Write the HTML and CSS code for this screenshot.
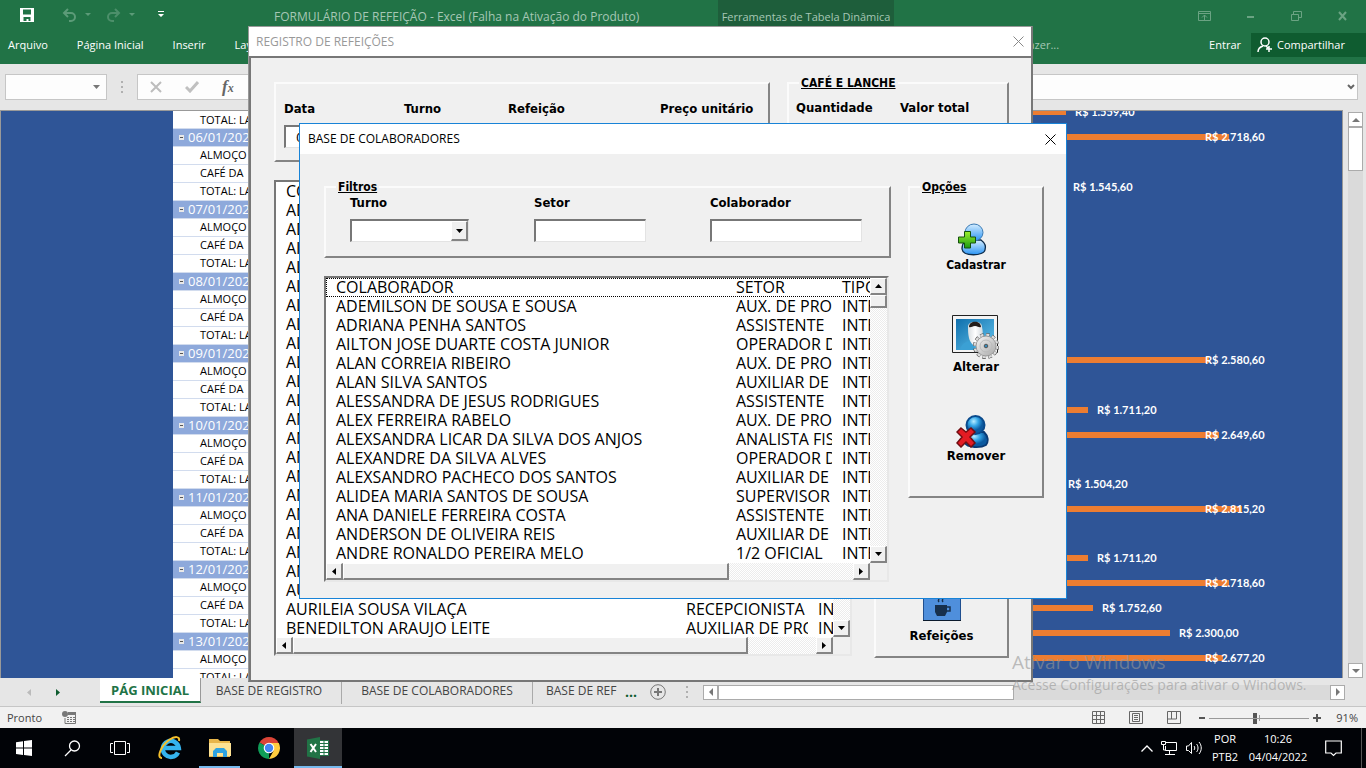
FILE: index.html
```
<!DOCTYPE html>
<html lang="pt-BR">
<head>
<meta charset="utf-8">
<title>FORMULÁRIO DE REFEIÇÃO - Excel</title>
<link rel="stylesheet" href="styles.css">
</head>
<body>
<div class="screen">
  <header class="ribbon">
    <div class="titlebar">
      <div class="quick">
        <button class="icon-btn" aria-label="Salvar"><svg width="14" height="14" viewBox="0 0 14 14"><path fill="#fff" fill-rule="evenodd" d="M0 0h14v14H0zM3 1.500h8v5H3zM3.500 9h7v4h-2v-2h-2v2h-3z"/></svg></button>
        <button class="icon-btn undo" aria-label="Desfazer"><svg width="30" height="14" viewBox="0 0 30 14"><path fill="none" stroke="#5c9b78" stroke-width="2" d="M6 1L2 5l4 4M2 5h7a4 4 0 0 1 0 8H7"/><path fill="#5c9b78" d="M23 5h6l-3 3z"/></svg></button>
        <button class="icon-btn redo" aria-label="Refazer"><svg width="30" height="14" viewBox="0 0 30 14"><path fill="none" stroke="#4c8f6a" stroke-width="2" d="M9 1l4 4-4 4M13 5H6a4 4 0 0 0 0 8h2"/><path fill="#5c9b78" d="M23 5h6l-3 3z"/></svg></button>
        <button class="icon-btn more-tools" aria-label="Personalizar"><svg width="6" height="8" viewBox="0 0 6 8"><path fill="#fff" d="M0 0h6v1H0zM0 3h6L3 6z"/></svg></button>
      </div>
      <span class="doc-title">FORMULÁRIO DE REFEIÇÃO - Excel (Falha na Ativação do Produto)</span>
      <span class="context-tab">Ferramentas de Tabela Dinâmica</span>
      <div class="win-controls">
        <button class="icon-btn" aria-label="Opções da faixa"><svg width="13" height="10" viewBox="0 0 13 10"><path fill="none" stroke="#6ba383" d="M.5.500h12v9H.5zM.5 2.500h12M6.500 9V4M4 6.500L6.500 4 9 6.500"/></svg></button>
        <button class="icon-btn" aria-label="Minimizar"><svg width="8" height="10" viewBox="0 0 8 10"><path fill="#6ba383" d="M0 5h7v2H0z"/></svg></button>
        <button class="icon-btn" aria-label="Restaurar"><svg width="11" height="10" viewBox="0 0 11 10"><path fill="none" stroke="#6ba383" d="M.5 3.500h7v6h-7zM2.500 3V.500h8v6H8"/></svg></button>
        <button class="icon-btn" aria-label="Fechar"><svg width="10" height="10" viewBox="0 0 10 10"><path stroke="#6ba383" stroke-width="2" d="M1 1l7 8M8 1L1 9"/></svg></button>
      </div>
    </div>
    <nav class="tabs">
      <a href="#" class="file">Arquivo</a><a href="#">Página Inicial</a><a href="#">Inserir</a><a href="#">Layout</a>
      <span class="tell">O que você deseja fazer...</span>
      <a href="#" class="enter">Entrar</a>
      <button class="share"><svg width="16" height="16" viewBox="0 0 16 16"><circle cx="8" cy="5" r="4" fill="none" stroke="#fff" stroke-width="1.500"/><path fill="none" stroke="#fff" stroke-width="1.500" d="M6 9c-3 1-5 3-5 6M9 9l2 2M12 9v6M9 12h6"/></svg>Compartilhar</button>
    </nav>
  </header>

  <div class="formula">
    <div class="namebox"><svg width="7" height="4" viewBox="0 0 7 4"><path fill="#777" d="M0 0h7L3.500 4z"/></svg></div>
    <svg class="grip" width="2" height="12" viewBox="0 0 2 12"><path fill="#b0b0b0" d="M0 0h2v2H0zM0 5h2v2H0zM0 10h2v2H0z"/></svg>
    <div class="fbox">
      <svg width="12" height="12" viewBox="0 0 12 12"><path stroke="#bdbdbd" stroke-width="2" d="M1 1l10 10M11 1L1 11"/></svg>
      <svg width="14" height="12" viewBox="0 0 14 12"><path fill="none" stroke="#c0c0c0" stroke-width="3" d="M1 6l4 4 8-9"/></svg>
      <span class="fx"><i>f</i><small>x</small></span>
      <svg class="expand" width="8" height="6" viewBox="0 0 8 6"><path fill="none" stroke="#666" stroke-width="2" d="M1 1l3 3 3-3"/></svg>
    </div>
  </div>

  <main class="sheet">
    <div class="grid-area">
      <div class="blank"></div>
      <table class="pivot">
        <tbody>
        <tr><td>TOTAL: LA</td></tr>
        <tr class="g"><th><b></b>06/01/2022</th></tr><tr><td>ALMOÇO</td></tr><tr><td>CAFÉ DA</td></tr><tr><td>TOTAL: LA</td></tr>
        <tr class="g"><th><b></b>07/01/2022</th></tr><tr><td>ALMOÇO</td></tr><tr><td>CAFÉ DA</td></tr><tr><td>TOTAL: LA</td></tr>
        <tr class="g"><th><b></b>08/01/2022</th></tr><tr><td>ALMOÇO</td></tr><tr><td>CAFÉ DA</td></tr><tr><td>TOTAL: LA</td></tr>
        <tr class="g"><th><b></b>09/01/2022</th></tr><tr><td>ALMOÇO</td></tr><tr><td>CAFÉ DA</td></tr><tr><td>TOTAL: LA</td></tr>
        <tr class="g"><th><b></b>10/01/2022</th></tr><tr><td>ALMOÇO</td></tr><tr><td>CAFÉ DA</td></tr><tr><td>TOTAL: LA</td></tr>
        <tr class="g"><th><b></b>11/01/2022</th></tr><tr><td>ALMOÇO</td></tr><tr><td>CAFÉ DA</td></tr><tr><td>TOTAL: LA</td></tr>
        <tr class="g"><th><b></b>12/01/2022</th></tr><tr><td>ALMOÇO</td></tr><tr><td>CAFÉ DA</td></tr><tr><td>TOTAL: LA</td></tr>
        <tr class="g"><th><b></b>13/01/2022</th></tr><tr><td>ALMOÇO</td></tr><tr><td>TOTAL: LA</td></tr>
        </tbody>
      </table>
      <div class="chart">
        <div class="bar-row" style="--end:218px"><i></i><span>R$ 1.559,40</span></div>
        <div class="bar-row" style="--end:381px"><i></i><span>R$ 2.718,60</span></div>
        <div class="bar-row"></div>
        <div class="bar-row" style="--end:216px"><i></i><span>R$ 1.545,60</span></div>
        <div class="bar-row"></div><div class="bar-row"></div><div class="bar-row"></div><div class="bar-row"></div><div class="bar-row"></div><div class="bar-row"></div>
        <div class="bar-row" style="--end:361px"><i></i><span>R$ 2.580,60</span></div>
        <div class="bar-row"></div>
        <div class="bar-row" style="--end:240px"><i></i><span>R$ 1.711,20</span></div>
        <div class="bar-row" style="--end:371px"><i></i><span>R$ 2.649,60</span></div>
        <div class="bar-row"></div>
        <div class="bar-row" style="--end:211px"><i></i><span>R$ 1.504,20</span></div>
        <div class="bar-row" style="--end:394px"><i></i><span>R$ 2.815,20</span></div>
        <div class="bar-row"></div>
        <div class="bar-row" style="--end:240px"><i></i><span>R$ 1.711,20</span></div>
        <div class="bar-row" style="--end:381px"><i></i><span>R$ 2.718,60</span></div>
        <div class="bar-row" style="--end:245px"><i></i><span>R$ 1.752,60</span></div>
        <div class="bar-row" style="--end:322px"><i></i><span>R$ 2.300,00</span></div>
        <div class="bar-row" style="--end:375px"><i></i><span>R$ 2.677,20</span></div>
      </div>
    </div>
    <div class="xl-vscroll">
      <button class="xl-btn" aria-label="Acima"><svg width="8" height="4" viewBox="0 0 8 4"><path fill="#777" d="M0 4h8L4 0z"/></svg></button>
      <div class="xl-thumb-v"></div>
      <button class="xl-btn end" aria-label="Abaixo"><svg width="8" height="4" viewBox="0 0 8 4"><path fill="#777" d="M0 0h8L4 4z"/></svg></button>
    </div>
  </main>

  <div class="sheet-tabs">
    <div class="tab-nav">
      <button class="icon-btn" aria-label="Anterior"><svg width="4" height="7" viewBox="0 0 4 7"><path fill="#bbb" d="M4 0v7L0 3.500z"/></svg></button>
      <button class="icon-btn" aria-label="Próxima"><svg width="4" height="7" viewBox="0 0 4 7"><path fill="#0e5c2f" d="M0 0v7l4-3.500z"/></svg></button>
    </div>
    <button class="stab active">PÁG INICIAL</button>
    <button class="stab t1">BASE DE REGISTRO</button>
    <button class="stab t2">BASE DE COLABORADORES</button>
    <button class="stab t3">BASE DE REF</button>
    <span class="more">...</span>
    <button class="icon-btn" aria-label="Nova planilha"><svg width="16" height="16" viewBox="0 0 16 16"><circle cx="8" cy="8" r="7.300" fill="none" stroke="#777"/><path stroke="#777" stroke-width="2" d="M8 4v8M4 8h8"/></svg></button>
    <svg class="tab-grip" width="2" height="12" viewBox="0 0 2 12"><path fill="#b0b0b0" d="M0 0h2v2H0zM0 5h2v2H0zM0 10h2v2H0z"/></svg>
    <div class="xl-hscroll">
      <button class="xl-btn" aria-label="Esquerda"><svg width="4" height="8" viewBox="0 0 4 8"><path fill="#777" d="M4 0v8L0 4z"/></svg></button>
      <div class="xl-thumb-h"></div>
      <button class="xl-btn end" aria-label="Direita"><svg width="4" height="8" viewBox="0 0 4 8"><path fill="#777" d="M0 0v8l4-4z"/></svg></button>
    </div>
  </div>

  <div class="status">
    <span>Pronto</span>
    <svg class="macro" width="14" height="13" viewBox="0 0 14 13"><path fill="none" stroke="#777" d="M3 7v5.500h10.500v-11H7"/><path fill="#777" d="M6 1h8v3H6zM5 6h2v1H5zM8 6h2v1H8zM11 6h2v1h-2zM5 8h2v1H5zM8 8h2v1H8zM11 8h2v1h-2zM5 10h2v1H5zM8 10h2v1H8zM11 10h2v1h-2z"/><circle cx="3" cy="3" r="3" fill="#777"/></svg>
    <div class="views">
      <svg width="13" height="13" viewBox="0 0 13 13"><path fill="none" stroke="#666" d="M.5.500h12v12H.5zM4.500 0v13M8.500 0v13M0 4.500h13M0 8.500h13"/></svg>
      <svg width="14" height="13" viewBox="0 0 14 13"><path fill="none" stroke="#666" d="M.5.500h13v12H.5zM3.500 2.500h7v8h-7zM5 4.500h4M5 6.500h4M5 8.500h4"/></svg>
      <svg width="14" height="13" viewBox="0 0 14 13"><path fill="none" stroke="#666" d="M.5.500h13v12H.5zM4.500 0v8M9.500 0v8H.5"/></svg>
    </div>
    <svg class="zoom" width="122" height="12" viewBox="0 0 122 12"><path fill="#555" d="M0 5h6v2H0zM114 5h8v2h-8zM117 2h2v8h-2zM54 1h4v11h-4z"/><path fill="#999" d="M10 6h100v1H10zM60 3h1v6h-1z"/></svg>
    <span class="pct">91%</span>
  </div>

  <footer class="taskbar">
    <button class="task" aria-label="Iniciar"><svg width="16" height="16" viewBox="0 0 16 16"><path fill="#fff" d="M0 2.300L7 1.200v6.300H0zM8 1l8-1v7.500H8zM0 8.500h7v6.400L0 13.900zM8 8.500h8V16l-8-1.100z"/></svg></button>
    <button class="task" aria-label="Pesquisar"><svg width="17" height="17" viewBox="0 0 17 17"><circle cx="10.500" cy="6" r="5" fill="none" stroke="#fff" stroke-width="1.300"/><path stroke="#fff" stroke-width="1.300" d="M7 10l-6 6"/></svg></button>
    <button class="task" aria-label="Visão de tarefas"><svg width="20" height="14" viewBox="0 0 20 14"><path fill="none" stroke="#fff" d="M4.500.500h11v13h-11zM3 2.500H.5v9H3M17 2.500h2.500v9H17"/></svg></button>
    <button class="task" aria-label="Internet Explorer"><svg width="24" height="24" viewBox="0 0 24 24"><path fill="none" stroke="#35b4ee" stroke-width="4.500" d="M20 16.500a8 8 0 1 1 .8-4.500H6"/><path fill="none" stroke="#f5c02c" stroke-width="2" d="M4 22C-2 22 3 10 11 4c6-4 11-4 10 1"/></svg></button>
    <button class="task open folder" aria-label="Explorador"><svg width="22" height="20" viewBox="0 0 22 20"><path fill="#e8b64a" d="M0 1h9l2 2h10v16H0z"/><path fill="#fde293" d="M0 5h22v13H0z"/><path fill="#2ea3e0" d="M4 19v-6l3-3h8l3 3v6h-4v-4H8v4z"/></svg></button>
    <button class="task chrome" aria-label="Chrome"><svg width="22" height="22" viewBox="0 0 22 22"><path fill="#db4437" d="M11 11L1.500 5.500a11 11 0 0 1 19 0z"/><path fill="#0f9d58" d="M11 11v11A11 11 0 0 1 1.500 5.500z"/><path fill="#ffcd40" d="M11 6h9.800a11 11 0 0 1-9.800 16l4.500-8z"/><circle cx="11" cy="11" r="5.300" fill="#fff"/><circle cx="11" cy="11" r="4.200" fill="#4285f4"/></svg></button>
    <button class="task open excel" aria-label="Excel"><svg width="22" height="22" viewBox="0 0 22 22"><path fill="#fff" stroke="#217346" d="M12 3.500h9.500v15H12z"/><path stroke="#217346" d="M13 6.500h8M13 9.500h8M13 12.500h8M13 15.500h8M17 4v14"/><path fill="#217346" d="M0 2.500L13 0v22L0 19.500z"/><path stroke="#fff" stroke-width="2" d="M3.500 7l5.500 8M9 7l-5.500 8"/></svg></button>
    <div class="tray">
      <svg width="12" height="7" viewBox="0 0 12 7"><path fill="none" stroke="#fff" stroke-width="1.300" d="M.5 6.500L6 1l5.500 5.500"/></svg>
      <svg width="17" height="14" viewBox="0 0 17 14"><path fill="none" stroke="#fff" d="M5 1.500h10.500v8H4.500V5M8.500 10v3M4 13.500h10M.5 .5h4v3h-4zM2.500 4v5H5"/></svg>
      <svg width="17" height="14" viewBox="0 0 17 14"><path fill="none" stroke="#fff" d="M.5 5v4.500h2l3 3v-11l-3 3.500zM8 5c1 1 1 3 0 4M10.500 3c2 2 2 6 0 8M13 1c3 3.500 3 8.500 0 12"/></svg>
      <span class="two">POR<br>PTB2</span>
      <span class="two clock">10:26<br>04/04/2022</span>
      <svg class="note" width="17" height="17" viewBox="0 0 17 17"><path fill="none" stroke="#fff" stroke-width="1.200" d="M.7 1h15.600v12H11l-2.500 2.500L6 13H.7z"/></svg>
      <span class="peek"></span>
    </div>
  </footer>

  <section class="dialog back">
    <div class="dlg-title"><span>REGISTRO DE REFEIÇÕES</span><button class="icon-btn" aria-label="Fechar"><svg width="11" height="11" viewBox="0 0 11 11"><path stroke="#888" d="M.5.500l10 10M10.500.500l-10 10"/></svg></button></div>
    <div class="dlg-body">
      <div class="meal-row">
        <fieldset class="frame meal">
          <div class="heads"><label for="data">Data</label><span>Turno</span><span>Refeição</span><span>Preço unitário</span></div>
          <input class="sunk" id="data" value="04/04/2022">
        </fieldset>
        <fieldset class="frame snack"><legend>CAFÉ E LANCHE</legend><div class="heads2"><span>Quantidade</span><span>Valor total</span></div></fieldset>
      </div>
      <div class="low-row">
        <div class="listbox l1">
          <div class="view">
            <table class="rows">
              <colgroup><col class="c-name"><col class="c-set1"><col></colgroup>
              <tbody>
              <tr><td>COLABORADOR</td><td></td><td></td></tr>
              <tr><td>ADEMILSON</td><td></td><td></td></tr><tr><td>ADRIANA</td><td></td><td></td></tr><tr><td>AILTON</td><td></td><td></td></tr>
              <tr><td>ALAN</td><td></td><td></td></tr><tr><td>ALAN</td><td></td><td></td></tr><tr><td>ALESSANDRA</td><td></td><td></td></tr><tr><td>ALEX</td><td></td><td></td></tr>
              <tr><td>ALEXSANDRA</td><td></td><td></td></tr><tr><td>ALEXANDRE</td><td></td><td></td></tr><tr><td>ALEXSANDRO</td><td></td><td></td></tr><tr><td>ALIDEA</td><td></td><td></td></tr>
              <tr><td>ANA</td><td></td><td></td></tr><tr><td>ANDERSON</td><td></td><td></td></tr><tr><td>ANDRE</td><td></td><td></td></tr>
              <tr><td>AN</td><td></td><td></td></tr><tr><td>AN</td><td></td><td></td></tr><tr><td>AN</td><td></td><td></td></tr><tr><td>AN</td><td></td><td></td></tr><tr><td>AN</td><td></td><td></td></tr><tr><td>AN</td><td></td><td></td></tr>
              <tr><td>AU</td><td></td><td></td></tr>
              <tr><td>AURILEIA SOUSA VILAÇA</td><td>RECEPCIONISTA</td><td>INTERNO</td></tr>
              <tr><td>BENEDILTON ARAUJO LEITE</td><td>AUXILIAR DE PRODUÇÃO</td><td>INTERNO</td></tr>
              </tbody>
            </table>
          </div>
          <div class="vs"><button class="sb" aria-label="Acima"><svg width="7" height="4" viewBox="0 0 7 4"><path d="M0 4h7L3.500 0z"/></svg></button><div class="th-v"></div><button class="sb end" aria-label="Abaixo"><svg width="7" height="4" viewBox="0 0 7 4"><path d="M0 0h7L3.500 4z"/></svg></button></div>
          <div class="hs"><button class="sb" aria-label="Esquerda"><svg width="4" height="7" viewBox="0 0 4 7"><path d="M4 0v7L0 3.500z"/></svg></button><div class="th-h w1"></div><button class="sb end" aria-label="Direita"><svg width="4" height="7" viewBox="0 0 4 7"><path d="M0 0v7l4-3.500z"/></svg></button></div>
        </div>
        <fieldset class="frame meals"><button class="cmd meal-btn"><svg width="38" height="38" viewBox="0 0 38 38"><path fill="#4f8fdc" stroke="#1f4f8f" d="M.5.500h37v37H.5z"/><path stroke="#0b1a2c" d="M0 37.500h38"/><path fill="#17304d" d="M12 22h12v7l-2 4h-8l-2-4z"/><path fill="none" stroke="#17304d" stroke-width="1.500" d="M24 24h3v4h-4M16 19c-2-2 1-3 0-5M20 19c-2-2 1-4 0-6"/></svg><span>Refeições</span></button></fieldset>
      </div>
    </div>
  </section>

  <section class="dialog front">
    <div class="dlg-title"><span>BASE DE COLABORADORES</span><button class="icon-btn" aria-label="Fechar"><svg width="11" height="11" viewBox="0 0 11 11"><path stroke="#000" d="M.5.500l10 10M10.500.500l-10 10"/></svg></button></div>
    <div class="front-body">
      <div class="left">
        <fieldset class="frame filters">
          <legend>Filtros</legend>
          <div class="fields">
            <div class="field f1"><label for="turno">Turno</label><div class="combo sunk"><select id="turno"><option></option></select><span class="sb"><svg width="7" height="4" viewBox="0 0 7 4"><path d="M0 0h7L3.500 4z"/></svg></span></div></div>
            <div class="field f2"><label for="setor">Setor</label><input class="sunk" id="setor"></div>
            <div class="field f3"><label for="colab">Colaborador</label><input class="sunk" id="colab"></div>
          </div>
        </fieldset>
        <div class="listbox l2">
          <div class="view">
            <table class="rows">
              <colgroup><col class="c-name"><col class="c-set2"><col></colgroup>
              <thead><tr><th>COLABORADOR</th><th>SETOR</th><th>TIPO</th></tr></thead>
              <tbody>
              <tr><td>ADEMILSON DE SOUSA E SOUSA</td><td>AUX. DE PRO</td><td>INTERNO</td></tr>
              <tr><td>ADRIANA PENHA SANTOS</td><td>ASSISTENTE</td><td>INTERNO</td></tr>
              <tr><td>AILTON JOSE DUARTE COSTA JUNIOR</td><td>OPERADOR DE</td><td>INTERNO</td></tr>
              <tr><td>ALAN CORREIA RIBEIRO</td><td>AUX. DE PRO</td><td>INTERNO</td></tr>
              <tr><td>ALAN SILVA SANTOS</td><td>AUXILIAR DE</td><td>INTERNO</td></tr>
              <tr><td>ALESSANDRA DE JESUS RODRIGUES</td><td>ASSISTENTE</td><td>INTERNO</td></tr>
              <tr><td>ALEX FERREIRA RABELO</td><td>AUX. DE PRO</td><td>INTERNO</td></tr>
              <tr><td>ALEXSANDRA LICAR DA SILVA DOS ANJOS</td><td>ANALISTA FISCAL</td><td>INTERNO</td></tr>
              <tr><td>ALEXANDRE DA SILVA ALVES</td><td>OPERADOR DE</td><td>INTERNO</td></tr>
              <tr><td>ALEXSANDRO PACHECO DOS SANTOS</td><td>AUXILIAR DE</td><td>INTERNO</td></tr>
              <tr><td>ALIDEA MARIA SANTOS DE SOUSA</td><td>SUPERVISOR</td><td>INTERNO</td></tr>
              <tr><td>ANA DANIELE FERREIRA COSTA</td><td>ASSISTENTE</td><td>INTERNO</td></tr>
              <tr><td>ANDERSON DE OLIVEIRA REIS</td><td>AUXILIAR DE</td><td>INTERNO</td></tr>
              <tr><td>ANDRE RONALDO PEREIRA MELO</td><td>1/2 OFICIAL</td><td>INTERNO</td></tr>
              </tbody>
            </table>
          </div>
          <div class="vs"><button class="sb" aria-label="Acima"><svg width="7" height="4" viewBox="0 0 7 4"><path d="M0 4h7L3.500 0z"/></svg></button><div class="th-v"></div><button class="sb end" aria-label="Abaixo"><svg width="7" height="4" viewBox="0 0 7 4"><path d="M0 0h7L3.500 4z"/></svg></button></div>
          <div class="hs"><button class="sb" aria-label="Esquerda"><svg width="4" height="7" viewBox="0 0 4 7"><path d="M4 0v7L0 3.500z"/></svg></button><div class="th-h w2"></div><button class="sb end" aria-label="Direita"><svg width="4" height="7" viewBox="0 0 4 7"><path d="M0 0v7l4-3.500z"/></svg></button></div>
        </div>
      </div>
      <fieldset class="frame options">
        <legend>Opções</legend>
        <button class="cmd add"><svg width="36" height="34" viewBox="0 0 36 34">
          <defs><linearGradient id="sky" x2="0" y2="1"><stop offset="0" stop-color="#d4edff"/><stop offset="1" stop-color="#2a94f4"/></linearGradient><linearGradient id="grass" x2="0" y2="1"><stop offset="0" stop-color="#9cf02c"/><stop offset="1" stop-color="#1a9a12"/></linearGradient></defs>
          <path fill="url(#sky)" stroke="#0a2a4a" stroke-width="1.300" d="M4 26c0-7 4-9 7-9h12c4 3 5 7 4 10-1 6-22 7-23-1z"/><ellipse cx="16" cy="9.500" rx="9" ry="8.500" fill="url(#sky)" stroke="#3a7ab4"/><path fill="url(#grass)" stroke="#14500c" d="M6.500 8.500h6v5.500h5v6h-5v5h-6v-5h-6v-6h6z"/></svg><span>Cadastrar</span></button>
        <button class="cmd edit"><svg width="48" height="44" viewBox="0 0 48 44">
          <defs><linearGradient id="photo" x2="1" y2="1"><stop offset="0" stop-color="#0f6fac"/><stop offset="1" stop-color="#64c4ee"/></linearGradient><linearGradient id="gear" x2="1" y2="1"><stop offset="0" stop-color="#f6f6f6"/><stop offset="1" stop-color="#a8a8a8"/></linearGradient><linearGradient id="skin"><stop offset="0" stop-color="#d8dde0"/><stop offset=".5" stop-color="#fff"/><stop offset="1" stop-color="#d4dade"/></linearGradient></defs>
          <path fill="#f4f4f4" stroke="#222" d="M.5.500h45v37H.5z"/><path fill="url(#photo)" d="M4 4h38v31H4z"/><path fill="#3ba0d4" d="M8 35c1-5 4-8 9-9l8 9z"/><path fill="url(#skin)" d="M16 12c0-3 2-5 7-5s7 2 7 5c1 4 1 8 0 11-1 4-3 8-6 8s-6-4-7-8c-1-4-1-8-1-11z"/><path fill="#241d1a" d="M17 12c0-7 12-7 12 0-2 1-3-1-6-1s-4 2-6 1z"/>
          <circle cx="34" cy="31" r="11.500" fill="none" stroke="#444" stroke-width="3" stroke-dasharray="3.500 2.500"/><circle cx="34" cy="31" r="11" fill="none" stroke="#dcdcdc" stroke-width="3" stroke-dasharray="3 2.750"/><circle cx="34" cy="31" r="10" fill="url(#gear)" stroke="#999"/><circle cx="34" cy="31" r="6" fill="none" stroke="#bbb"/><circle cx="34" cy="31" r="1.800" fill="#3a8ab8" stroke="#555"/></svg><span>Alterar</span></button>
        <button class="cmd del"><svg width="40" height="33" viewBox="0 0 40 33">
          <defs><radialGradient id="deep" cx=".4" cy=".3"><stop offset="0" stop-color="#b8ecff"/><stop offset=".5" stop-color="#36a8e8"/><stop offset="1" stop-color="#0c5aa0"/></radialGradient></defs>
          <path fill="url(#deep)" stroke="#0a3a74" stroke-width="1.800" d="M9 28c0-7 4-10 8-11h11c4 4 5 9 2 13-5 3-19 3-21-2z"/><circle cx="19.500" cy="10" r="9" fill="url(#deep)" stroke="#0a4a8c" stroke-width="2"/><path fill="#e31b23" stroke="#700d12" stroke-width="1.500" d="M5 13l5 4 5-4 4 4-5 5 5 6-4 4-5-5-5 5-4-4 5-6-5-5z"/></svg><span>Remover</span></button>
      </fieldset>
    </div>
  </section>

  <div class="watermark"><p class="wm1">Ativar o Windows</p><p class="wm2">Acesse Configurações para ativar o Windows.</p></div>
</div>
</body>
</html>
```
FILE: styles.css
```
* { box-sizing: border-box; }
body { margin: 0; font: 12px/16px "Open Sans", "Noto Sans", sans-serif; color: #000; }
button, input, select { font: inherit; color: inherit; margin: 0; padding: 0; border: 0; background: none; border-radius: 0; outline: 0; }
a { color: inherit; text-decoration: none; }
svg { display: block; flex: none; }
p { margin: 0; }
.icon-btn { display: flex; align-items: center; justify-content: center; }
.screen { position: relative; height: 100vh; display: flex; flex-direction: column; overflow: hidden; background: #e6e6e6; }

/* Ribbon */
.ribbon { background: #217346; height: 64px; color: #fff; flex: none; }
.titlebar { display: flex; height: 33px; align-items: center; padding-left: 20px; white-space: nowrap; }
.quick { display: flex; gap: 14px; align-items: center; width: 254px; flex: none; padding-bottom: 4px; }
.undo { margin-left: 14px; }
.more-tools { margin-left: 8px; }
.doc-title { color: #a6c7b5; width: 444px; }
.context-tab { background: #1e5e3b; color: #a6c7b5; height: 33px; line-height: 33px; width: 176px; text-align: center; font-size: 11px; flex: none; }
.win-controls { margin-left: auto; display: flex; gap: 36px; padding: 0 18px 2px 0; }
.tabs { display: flex; height: 24px; align-items: center; white-space: nowrap; font-size: 11px; }
.tabs a { margin-left: 29px; }
.tabs .file { margin-left: 8px; }
.tabs .tell { margin-left: auto; color: #a6c7b5; }
.tabs .enter { margin: 0 10px 0 150px; }
.share { display: flex; align-items: center; gap: 4px; width: 115px; padding-left: 6px; height: 24px; background: #0f5c30; }

/* Formula bar */
.formula { height: 46px; flex: none; display: flex; align-items: center; padding: 0 8px 0 5px; }
.namebox, .fbox { height: 26px; background: #fdfdfd; border: 1px solid #c6c6c6; display: flex; align-items: center; }
.namebox { width: 102px; justify-content: flex-end; padding-right: 6px; }
.grip { margin: 0 14px; }
.fbox { flex: 1; gap: 23px; padding: 0 2px 0 12px; }
.fx { color: #666; font-family: "Liberation Serif", serif; font-size: 17px; font-weight: bold; }
.fx small { font-size: 12px; font-style: italic; }
.expand { margin-left: auto; }

/* Worksheet */
.sheet { flex: 1; min-height: 0; display: flex; }
.grid-area { flex: 1; display: flex; min-width: 0; overflow: hidden; background: #2f5597; border: 1px solid #999; border-bottom: 0; }
.blank { width: 172px; flex: none; }
.pivot { width: 180px; flex: none; align-self: flex-start; border-collapse: collapse; background: #fff; table-layout: fixed; }
.pivot td, .pivot th { height: 18px; padding: 0 0 0 27px; border-bottom: 1px solid #d2dcee; text-align: left; font-weight: 400; white-space: nowrap; line-height: 16px; }
.pivot tr:first-child td { height: 17px; line-height: 15px; }
.pivot td { font-size: 11px; }
.pivot th { background: #8ea9db; color: #fff; padding-left: 6px; font-size: 13px; }
.pivot b { display: inline-block; width: 5px; height: 5px; margin-right: 4px; vertical-align: 2px; border: 2px solid #e8e8e8; border-width: 2px 1px; background: #555; }
.chart { margin: -11px 0 0 495px; padding-bottom: 8px; flex: 1; display: flex; flex-direction: column; }
.bar-row { flex: 1; display: grid; align-items: center; }
.bar-row > * { grid-area: 1 / 1; }
.bar-row i { height: 6px; width: var(--end); background: #ed7d31; }
.bar-row span { margin-left: min(calc(var(--end) + 9px), 357px); color: #fff; font: bold 11px/14px Lato, sans-serif; white-space: nowrap; }

.xl-vscroll { width: 23px; padding: 2px 3px 0 5px; display: flex; flex-direction: column; background: linear-gradient(#dadada, #dadada) content-box; }
.xl-btn { width: 15px; height: 15px; flex: none; display: flex; align-items: center; justify-content: center; background: #fff; border: 1px solid #ababab; }
.xl-thumb-v { height: 44px; background: #fff; border: 1px solid #ababab; }
.xl-vscroll .end { margin-top: auto; }

/* Sheet tabs */
.sheet-tabs { height: 29px; flex: none; display: flex; align-items: center; border-bottom: 1px solid #c6c6c6; white-space: nowrap; color: #444; }
.tab-nav { display: flex; gap: 25px; width: 100px; padding-left: 27px; flex: none; }
.stab { height: 26px; align-self: flex-start; flex: none; }
.stab.active { width: 101px; height: 25px; background: #fff; border-bottom: 2px solid #217346; color: #217346; font-weight: bold; font-size: 13px; border-right: 1px solid #999; }
.stab.t1 { width: 141px; padding-right: 4px; border-right: 1px solid #aaa; }
.stab.t2 { width: 191px; border-right: 1px solid #aaa; }
.stab.t3 { width: 85px; padding-left: 13px; text-align: left; }
.more { color: #0e5c2f; font-weight: bold; font-size: 14px; width: 32px; padding-left: 7px; flex: none; }
.tab-grip { margin: 0 15px 0 20px; }
.xl-hscroll { flex: 1; display: flex; background: #dadada; margin-right: 21px; }
.xl-thumb-h { width: 296px; background: #fff; border: 1px solid #ababab; }
.xl-hscroll .end { margin-left: auto; }

.status { height: 21px; flex: none; background: #f1f1f1; display: flex; align-items: center; padding: 0 8px 0 7px; color: #444; font-size: 11px; }
.macro { margin-left: 20px; }
.views { margin-left: auto; display: flex; gap: 24px; }
.zoom { margin: 0 15px 0 18px; }

/* Taskbar */
.taskbar { height: 40px; flex: none; background: #010307; display: flex; color: #fff; }
.task { width: 48px; display: flex; align-items: center; justify-content: center; border-bottom: 2px solid transparent; border-top: 2px solid transparent; flex: none; }
.task:nth-of-type(4) { width: 55px; padding-right: 3px; }
.task.open { border-bottom-color: #76b9ed; }
.task.folder { width: 41px; }
.task.chrome { width: 54px; padding-left: 4px; }
.task.excel { background: #333437; border-top-color: #333437; }
.tray { margin-left: auto; display: flex; align-items: center; }
.tray svg { margin-right: 8px; }
.tray .two { text-align: center; line-height: 18px; font-size: 11px; width: 28px; margin-right: 8px; }
.tray .clock { width: 62px; margin-right: 16px; }
.tray .note { margin-right: 19px; }
.peek { width: 5px; height: 40px; border-left: 1px solid #555; }

/* Dialogs */
.dialog { position: absolute; background: #f0f0f0; font: bold 13px/16px "DejaVu Sans Condensed", "Noto Sans", sans-serif; }
.back { left: 248px; top: 26px; width: 785px; border: 1px solid #999; border-right: 2px solid #777; border-bottom: 2px solid #777; }
.front { left: 299px; top: 123px; width: 768px; border: 1px solid #1883d7; }
.dlg-title { background: #fff; height: 30px; display: flex; align-items: center; justify-content: space-between; padding: 0 10px 0 8px; font: 12px/16px "Open Sans", "Noto Sans", sans-serif; }
.back .dlg-title { color: #999; padding: 0 7px; height: 29px; }
.dlg-body { border-top: 2px solid #777; border-left: 2px solid #777; padding: 17px 22px 24px 23px; }
.frame { margin: 0; padding: 0; min-width: 0; border: 2px solid #fbfbfb; border-right-color: #848484; border-bottom-color: #848484; }
.frame legend { margin-left: 10px; padding: 0 2px; font-size: 12px; line-height: 16px; text-decoration: underline; }
.meal-row { display: flex; gap: 17px; height: 87px; }
.meal { width: 496px; margin-top: 7px; padding: 17px 8px 0; }
.heads { display: grid; grid-template-columns: 120px 104px 152px 1fr; white-space: nowrap; }
.snack { flex: 1; }
.heads2 { display: grid; grid-template-columns: 104px 1fr; padding: 9px 0 0 7px; white-space: nowrap; }
.sunk { border: 2px solid #777; border-right: 1px solid #e3e3e3; border-bottom: 1px solid #e3e3e3; background: #fff; height: 23px; }
.meal .sunk { width: 110px; margin-top: 8px; padding-left: 10px; font-weight: 400; }
.low-row { display: flex; gap: 22px; margin-top: 18px; }
.meals { flex: 1; display: flex; justify-content: center; align-items: flex-end; padding: 0 0 12px; margin-bottom: -2px; }

.listbox { display: grid; grid-template-columns: 1fr 17px; border: 2px solid #777; border-right-color: #e8e8e8; border-bottom-color: #e8e8e8; background: #f0f0f0; }
.l1 { width: 578px; grid-template-rows: 455px 17px; }
.l2 { width: 565px; grid-template-rows: 285px 17px; margin-top: 18px; }
.view { background: #fff; overflow: hidden; min-width: 0; }
.rows { width: 600px; table-layout: fixed; border-collapse: collapse; font: 16px/19px "Open Sans", "Noto Sans", sans-serif; }
.rows td, .rows th { height: 19px; padding: 0 0 0 10px; font-weight: 400; text-align: left; white-space: nowrap; overflow: hidden; }
.rows thead tr { outline: 1px dotted #000; outline-offset: -1px; }
.c-name { width: 400px; }
.c-set1 { width: 132px; }
.c-set2 { width: 106px; }
.vs, .hs { display: flex; background: repeating-conic-gradient(#fff 0 25%, #ececec 0 50%) 0 0 / 2px 2px; }
.vs { flex-direction: column; }
.sb, .th-v, .th-h { background: #f0f0f0; border: 1px solid #fff; border-right: 2px solid #848484; border-bottom: 2px solid #848484; }
.sb { width: 17px; height: 17px; flex: none; display: flex; align-items: center; justify-content: center; }
.sb.end { margin-top: auto; }
.hs .sb.end { margin: 0 0 0 auto; }
.th-v { height: 13px; }
.w1 { width: 455px; }
.w2 { width: 386px; }

.front-body { display: flex; gap: 17px; align-items: flex-start; padding: 25px 22px 16px 24px; }
.left { width: 567px; }
.fields { display: flex; padding: 0 0 14px 24px; }
.field label { display: block; margin-bottom: 8px; }
.field .sunk { display: flex; width: 100%; }
.f1 { width: 119px; margin-right: 65px; }
.f2 { width: 112px; margin-right: 64px; }
.f3 { width: 152px; }
.combo select { appearance: none; flex: 1; min-width: 0; }
.combo .sb { height: 20px; }
.options { flex: 1; height: 319px; display: flex; flex-direction: column; align-items: center; }
.cmd { display: flex; flex-direction: column; align-items: center; font-weight: bold; }
.add { margin-top: 28px; font-size: 12px; }
.edit { margin-top: 42px; }
.del { margin-top: 40px; }
.meal-btn { gap: 7px; }

.watermark { position: absolute; left: 1012px; top: 650px; color: rgba(150, 150, 150, .6); white-space: nowrap; pointer-events: none; }
.wm1 { font-size: 19px; line-height: 24px; }
.wm2 { font-size: 14px; line-height: 22px; }
```
